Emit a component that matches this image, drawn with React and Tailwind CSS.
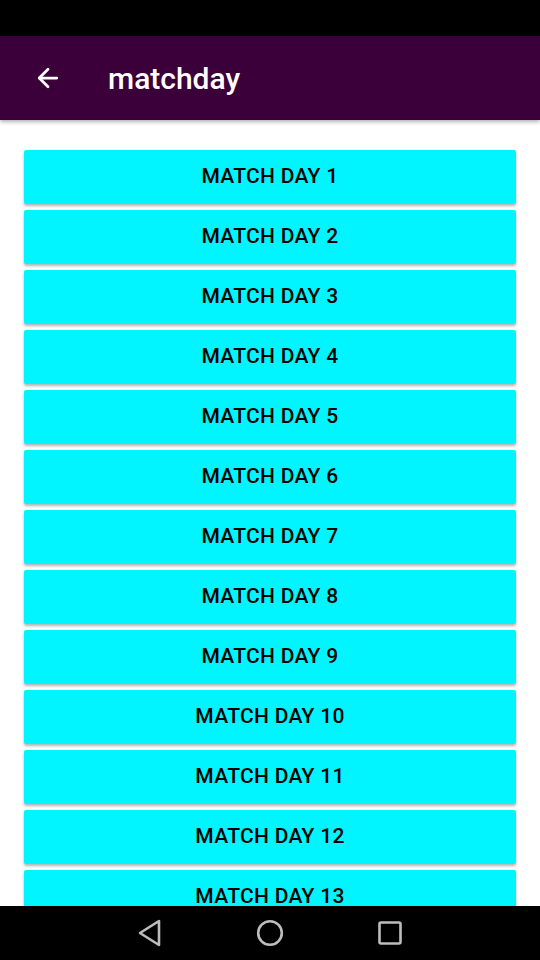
import { ArrowLeft } from 'lucide-react';

const days = Array.from({ length: 13 }, (_, i) => i + 1);

function NavBar() {
  return (
    <div className="h-[54px] bg-black flex items-center justify-center shrink-0">
      <div className="w-[120px] flex justify-center">
        <svg width="28" height="30" viewBox="0 0 28 30" fill="none" stroke="#bdbdbd" strokeWidth="2.6" strokeLinejoin="round">
          <path d="M23 3 L23 27 L4 15 Z" />
        </svg>
      </div>
      <div className="w-[120px] flex justify-center">
        <svg width="28" height="28" viewBox="0 0 28 28" fill="none" stroke="#bdbdbd" strokeWidth="2.6">
          <circle cx="14" cy="14" r="11.8" />
        </svg>
      </div>
      <div className="w-[120px] flex justify-center">
        <svg width="26" height="26" viewBox="0 0 26 26" fill="none" stroke="#bdbdbd" strokeWidth="2.6" strokeLinejoin="round">
          <rect x="2.5" y="2.5" width="21" height="21" rx="1.5" />
        </svg>
      </div>
    </div>
  );
}

export default function App() {
  return (
    <div className="h-screen w-full flex flex-col bg-white overflow-hidden" style={{ fontFamily: 'Roboto, "Noto Sans", sans-serif' }}>
      <div className="h-9 bg-black shrink-0" />

      {/* App bar */}
      <div className="h-[84px] bg-[#3b0039] flex items-center shrink-0 shadow-[0_2px_4px_rgba(0,0,0,0.3)] relative z-10">
        <ArrowLeft className="ml-[33px] text-white" size={30} strokeWidth={2.2} />
        <h1 className="ml-[45px] text-white text-[30px] font-medium">matchday</h1>
      </div>

      {/* List */}
      <div className="flex-1 overflow-hidden px-6 pt-[30px]">
        <div className="flex flex-col gap-1.5">
          {days.map((d) => (
            <button
              key={d}
              className="h-[54px] w-full bg-[#00f5ff] shadow-[0_2px_3px_rgba(0,0,0,0.3)] rounded-[2px] text-black text-[21px] font-medium tracking-[0.3px] shrink-0"
            >
              MATCH DAY {d}
            </button>
          ))}
        </div>
      </div>

      <NavBar />
    </div>
  );
}
